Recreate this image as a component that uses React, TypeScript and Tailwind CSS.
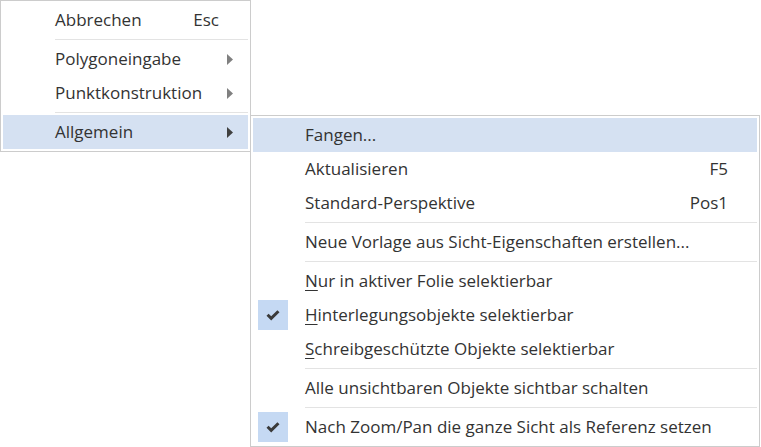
import React from "react";

type Item =
  | { kind: "sep" }
  | {
      kind: "item";
      label: React.ReactNode;
      shortcut?: string;
      submenu?: boolean;
      active?: boolean;
      checked?: boolean;
    };

const u = (ch: string, rest: string) => (
  <>
    <span className="underline underline-offset-[3px] decoration-1">{ch}</span>
    {rest}
  </>
);

const mainItems: Item[] = [
  { kind: "item", label: "Abbrechen", shortcut: "Esc" },
  { kind: "sep" },
  { kind: "item", label: "Polygoneingabe", submenu: true },
  { kind: "item", label: "Punktkonstruktion", submenu: true },
  { kind: "sep" },
  { kind: "item", label: "Allgemein", submenu: true, active: true },
];

const subItems: Item[] = [
  { kind: "item", label: "Fangen...", active: true },
  { kind: "item", label: "Aktualisieren", shortcut: "F5" },
  { kind: "item", label: "Standard-Perspektive", shortcut: "Pos1" },
  { kind: "sep" },
  { kind: "item", label: "Neue Vorlage aus Sicht-Eigenschaften erstellen..." },
  { kind: "sep" },
  { kind: "item", label: u("N", "ur in aktiver Folie selektierbar") },
  { kind: "item", label: u("H", "interlegungsobjekte selektierbar"), checked: true },
  { kind: "item", label: u("S", "chreibgeschützte Objekte selektierbar") },
  { kind: "sep" },
  { kind: "item", label: "Alle unsichtbaren Objekte sichtbar schalten" },
  { kind: "sep" },
  { kind: "item", label: "Nach Zoom/Pan die ganze Sicht als Referenz setzen", checked: true },
];

const Arrow = ({ dark }: { dark?: boolean }) => (
  <svg width="6" height="11" viewBox="0 0 6 11" className={dark ? "fill-[#404040]" : "fill-[#808080]"}>
    <path d="M0 0 L6 5.5 L0 11 Z" />
  </svg>
);

const Check = () => (
  <svg width="14" height="11" viewBox="0 0 14 11" className="fill-[#3a3a3a]">
    <path d="M0.5 5.8 L2.6 3.7 L5.2 6.3 L11.4 0.2 L13.5 2.3 L5.2 10.5 Z" />
  </svg>
);

function Menu({ items }: { items: Item[] }) {
  return (
    <div className="flex flex-col bg-white border border-[#cccccc] p-[2px]">
      {items.map((it, i) =>
        it.kind === "sep" ? (
          <div key={i} className="h-[5px] flex items-center pl-[52px]">
            <div className="h-px w-full bg-[#e3e3e3]" />
          </div>
        ) : (
          <div
            key={i}
            className={`h-[34px] flex items-center ${it.active ? "bg-[#d5e1f2]" : ""}`}
          >
            <div className="w-[52px] shrink-0 flex items-center pl-[5px]">
              {it.checked && (
                <div className="w-[30px] h-[30px] bg-[#c5d9f3] flex items-center justify-center">
                  <Check />
                </div>
              )}
            </div>
            <span className="flex-1 whitespace-nowrap">{it.label}</span>
            {it.shortcut && <span className="pr-[29px]">{it.shortcut}</span>}
            {it.submenu && (
              <span className="pr-[15px] flex items-center">
                <Arrow dark={it.active} />
              </span>
            )}
          </div>
        )
      )}
    </div>
  );
}

export default function App() {
  return (
    <div
      className="relative w-[761px] h-[447px] bg-white text-[#333333] text-[17px] overflow-hidden"
      style={{ fontFamily: '"Open Sans", "Noto Sans", sans-serif' }}
    >
      <div className="w-[251px]">
        <Menu items={mainItems} />
      </div>
      <div className="absolute left-[250px] top-[115px] w-[510px]">
        <Menu items={subItems} />
      </div>
    </div>
  );
}
